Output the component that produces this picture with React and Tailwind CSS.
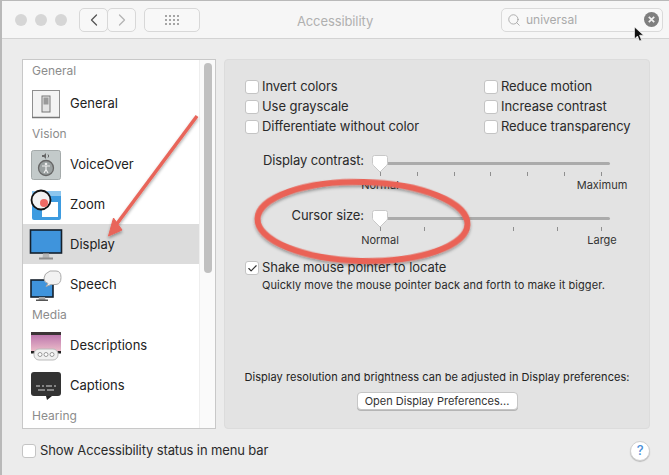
import { ChevronLeft, ChevronRight, Search, Check } from 'lucide-react';

const IconGeneral = () => (
  <svg width="34" height="34" viewBox="0 0 34 34">
    <rect x="3.500" y="3.500" width="27" height="27" fill="#f4f4f4" stroke="#8f8f8f" />
    <path d="M3 30.500h28" stroke="#777" strokeWidth="1.500" />
    <rect x="13" y="9" width="8" height="16" fill="#e4e4e4" stroke="#777" />
    <rect x="14.500" y="10.500" width="5" height="7" fill="#9a9a9a" />
  </svg>
);

const IconVoiceOver = () => (
  <svg width="34" height="34" viewBox="0 0 34 34">
    <rect x="2.500" y="2.500" width="29" height="29" rx="2" fill="#c3caca" stroke="#a4aaaa" />
    <path d="M13 7h2l2-2v6l-2-2h-2z" fill="#666" />
    <path d="M19 6.500q1.500 1.500 0 3" stroke="#666" fill="none" />
    <circle cx="17" cy="20" r="7.500" fill="#9aa0a0" stroke="#666" strokeWidth="1.300" />
    <circle cx="17" cy="16" r="1.300" fill="#eee" />
    <path d="M13 18h8M17 18v3.500l-2 3.500M17 21.500l2 3.500" stroke="#eee" strokeWidth="1.200" fill="none" />
  </svg>
);

const IconZoom = () => (
  <svg width="34" height="34" viewBox="0 0 34 34">
    <rect x="3" y="3" width="29" height="29" rx="2" fill="#3d9be0" />
    <rect x="3" y="3" width="29" height="5" fill="#8cc6ee" />
    <rect x="13" y="14" width="16" height="15" fill="#fff" />
    <circle cx="12" cy="12" r="9.500" fill="#f2f2f2" stroke="#111" strokeWidth="1.800" />
    <circle cx="15" cy="15" r="4" fill="#ee6a64" />
  </svg>
);

const IconDisplay = () => (
  <svg width="34" height="34" viewBox="0 0 34 34">
    <rect x="1.500" y="2" width="31" height="23" fill="#3f94dc" stroke="#14202c" strokeWidth="1.600" />
    <path d="M14 25.500h6l.5 5h-7z" fill="#b5b5b5" />
    <rect x="10" y="29.500" width="14" height="2" fill="#8d8d8d" />
  </svg>
);

const IconSpeech = () => (
  <svg width="34" height="34" viewBox="0 0 34 34">
    <rect x="2" y="12" width="22" height="17" fill="#3f94dc" stroke="#14202c" strokeWidth="1.600" />
    <path d="M10 29h6l.5 3h-7z" fill="#a8a8a8" />
    <rect x="7" y="31.500" width="12" height="1.500" fill="#555" />
    <path d="M21 3h6q5 0 5 6.500t-5 7h-5l-5 2 2-3q-4-1-4-5.500t6-7z" fill="#f2f2f2" stroke="#aaa" />
  </svg>
);

const IconDescriptions = () => (
  <svg width="34" height="34" viewBox="0 0 34 34">
    <defs>
      <linearGradient id="desc" x1="0" y1="0" x2="0" y2="1">
        <stop offset="0" stopColor="#b56aa8" />
        <stop offset="1" stopColor="#f0c4cc" />
      </linearGradient>
    </defs>
    <rect x="2" y="3" width="30" height="21" fill="url(#desc)" />
    <rect x="2" y="3" width="30" height="3" fill="#3c3436" />
    <rect x="2" y="22" width="30" height="2.500" fill="#222" />
    <rect x="5" y="20" width="24" height="11" rx="5" fill="#f0f0f0" stroke="#bbb" />
    <circle cx="11" cy="25.500" r="2" fill="#fff" stroke="#999" />
    <circle cx="17" cy="25.500" r="2" fill="#fff" stroke="#999" />
    <circle cx="23" cy="25.500" r="2" fill="#fff" stroke="#999" />
  </svg>
);

const IconCaptions = () => (
  <svg width="34" height="34" viewBox="0 0 34 34">
    <rect x="2" y="3" width="30" height="24" rx="3" fill="#333" />
    <path d="M17 27h6l-5 4z" fill="#222" />
    <path d="M7 17h4M13 17h2M17 17h6M25 17h2M9 21h7M18 21h7" stroke="#d8d8d8" strokeWidth="1" />
  </svg>
);

const SectionLabel = ({ children, first }) => (
  <div className={`flex items-center pl-[9px] text-[12px] text-[#8c8c8c] ${first ? 'h-[23px] pb-[2px]' : 'h-[21px]'}`}>{children}</div>
);

const ListRow = ({ icon, label, selected }) => (
  <div className={`flex h-[40px] items-center gap-[7px] pl-[6px] pt-[2px] text-[13px] text-[#222] ${selected ? 'bg-[#dcdcdc]' : ''}`}>
    {icon}
    <span>{label}</span>
  </div>
);

const Checkbox = ({ checked }) => (
  <span className="flex h-[14px] w-[14px] shrink-0 items-center justify-center rounded-[3px] border border-[#c4c4c4] bg-white">
    {checked && <Check size={11} strokeWidth={2.5} className="text-[#333]" />}
  </span>
);

const CheckRow = ({ label, checked }) => (
  <div className="flex h-[20px] items-center gap-[3px] text-[13px] tracking-[-0.07px] text-[#2a2a2a]">
    <Checkbox checked={checked} />
    <span>{label}</span>
  </div>
);

const Slider = ({ label, ticks, min, max }) => (
  <div className="flex h-[55px]">
    <div className="w-[119px] pt-[1px] text-right text-[13px] leading-[18px] tracking-[-0.1px] text-[#2a2a2a]">{label}</div>
    <div className="relative ml-[16px] w-[230px]">
      <div className="mt-[12px] h-[3px] rounded-full bg-[#ababab]" />
      <div className="relative mt-[7px] flex w-[222px] justify-between">
        {ticks.map((t) => (
          <span key={t} className="h-[4px] w-px bg-[#8f8f8f]" />
        ))}
      </div>
      <div className="absolute left-[-8px] top-[5px]">
        <svg width="16" height="18" viewBox="0 0 16 18">
          <path d="M2.500.5h11q2 0 2 2v6q0 1-1 2L8 17 1.500 10.500q-1-1-1-2v-6q0-2 2-2z" fill="#fff" stroke="#c8c8c8" />
        </svg>
      </div>
      <div className="absolute left-[-40px] top-[27px] w-[80px] text-center text-[11px] text-[#333]">{min}</div>
      <div className="absolute left-[182px] top-[27px] w-[80px] text-center text-[11px] text-[#333]">{max}</div>
    </div>
  </div>
);

export default function App() {
  return (
    <div className="h-[475px] w-[669px] overflow-hidden bg-[#b9b9b9] pl-[2px] pt-[1px] font-['Inter','Liberation_Sans',sans-serif]">
      <div className="relative h-[474px] w-[667px] rounded-tl-[5px] bg-[#ececec]">
        {/* barra de titulo */}
        <div className="relative flex h-[38px] items-center border-b border-[#d3d3d3] bg-[#f6f6f6] pl-[13px] pr-[6px]">
          <div className="flex gap-[8px]">
            <span className="h-[12px] w-[12px] rounded-full bg-[#d6d6d6]" />
            <span className="h-[12px] w-[12px] rounded-full bg-[#d6d6d6]" />
            <span className="h-[12px] w-[12px] rounded-full bg-[#d6d6d6]" />
          </div>
          <div className="ml-[12px] flex">
            <span className="flex h-[24px] w-[29px] items-center justify-center rounded-[5px] border border-[#d8d8d8] bg-[#f8f8f8]">
              <ChevronLeft size={20} strokeWidth={1.5} className="text-[#555]" />
            </span>
            <span className="-ml-px flex h-[24px] w-[29px] items-center justify-center rounded-[5px] border border-[#d8d8d8] bg-[#f8f8f8]">
              <ChevronRight size={20} strokeWidth={1.5} className="text-[#b5b5b5]" />
            </span>
          </div>
          <span className="ml-[8px] flex h-[24px] w-[56px] items-center justify-center rounded-[5px] border border-[#d8d8d8] bg-[#f8f8f8]">
            <span className="grid grid-cols-4 gap-[2px]">
              {Array.from({ length: 12 }).map((_, i) => (
                <span key={i} className="h-[2px] w-[2px] bg-[#a5a5a5]" />
              ))}
            </span>
          </span>
          <span className="absolute left-[233px] top-[11px] w-[200px] text-center text-[13px] tracking-[-0.1px] text-[#b0b0b0]">Accessibility</span>
          <div className="ml-auto flex h-[24px] w-[162px] items-center rounded-[5px] border border-[#dadada] bg-[#f8f8f8] pl-[5px] pr-[3px]">
            <Search size={14} strokeWidth={1.3} className="text-[#999]" />
            <span className="ml-[5px] text-[12px] text-[#aaa]">universal</span>
            <span className="ml-auto flex h-[15px] w-[15px] items-center justify-center rounded-full bg-[#7f7f7f]">
              <svg width="7" height="7" viewBox="0 0 7 7">
                <path d="M.8.8l5.400 5.400M6.200.8L.8 6.200" stroke="#f0f0f0" strokeWidth="1.700" />
              </svg>
            </span>
          </div>
        </div>

        <div className="flex gap-[8px] pl-[20px] pt-[20px]">
          {/* lista lateral */}
          <div className="flex h-[370px] w-[194px] overflow-hidden border border-[#c8c8c8] bg-white">
            <div className="w-[177px]">
              <SectionLabel first>General</SectionLabel>
              <ListRow icon={<IconGeneral />} label="General" />
              <SectionLabel>Vision</SectionLabel>
              <ListRow icon={<IconVoiceOver />} label="VoiceOver" />
              <ListRow icon={<IconZoom />} label="Zoom" />
              <ListRow icon={<IconDisplay />} label="Display" selected />
              <ListRow icon={<IconSpeech />} label="Speech" />
              <SectionLabel>Media</SectionLabel>
              <ListRow icon={<IconDescriptions />} label="Descriptions" />
              <ListRow icon={<IconCaptions />} label="Captions" />
              <SectionLabel>Hearing</SectionLabel>
            </div>
            <div className="flex-1 border-l border-[#eeeeee] bg-[#fafafa] px-[3.500px] pt-[3px]">
              <div className="h-[210px] w-[8px] rounded-full bg-[#c0c0c0]" />
            </div>
          </div>

          {/* panel de opciones */}
          <div className="flex h-[370px] w-[426px] flex-col rounded-[4px] border border-[#dcdcdc] bg-[#e3e3e3] pl-[20px] pt-[17px]">
            <div className="flex">
              <div className="w-[239px]">
                <CheckRow label="Invert colors" />
                <CheckRow label="Use grayscale" />
                <CheckRow label="Differentiate without color" />
              </div>
              <div>
                <CheckRow label="Reduce motion" />
                <CheckRow label="Increase contrast" />
                <CheckRow label="Reduce transparency" />
              </div>
            </div>
            <div className="mt-[13px]">
              <Slider label="Display contrast:" ticks={[1, 2, 3, 4, 5, 6, 7]} min="Normal" max="Maximum" />
            </div>
            <Slider label="Cursor size:" ticks={[1, 2, 3, 4, 5, 6]} min="Normal" max="Large" />
            <div className="mt-[-2px]">
              <CheckRow label="Shake mouse pointer to locate" checked />
            </div>
            <div className="pl-[17px] text-[11px] leading-[14px] tracking-[0.06px] text-[#2a2a2a]">
              Quickly move the mouse pointer back and forth to make it bigger.
            </div>
            <div className="-ml-[20px] mt-auto flex flex-col items-center pb-[18px]">
              <div className="text-[11px] tracking-[0.05px] text-[#222]">Display resolution and brightness can be adjusted in Display preferences:</div>
              <button className="mt-[7px] h-[18px] w-[161px] rounded-[4px] border border-[#c6c6c6] bg-white text-[11px] leading-[16px] text-[#333] shadow-[0_1px_0_#b5b5b5]">
                Open Display Preferences...
              </button>
            </div>
          </div>
        </div>

        {/* pie */}
        <div className="flex h-[36px] items-center pl-[20px] pr-[19px] pt-[8px] text-[13px] tracking-[-0.12px] text-[#2a2a2a]">
          <Checkbox />
          <span className="ml-[4px]">Show Accessibility status in menu bar</span>
          <span className="ml-auto flex h-[20px] w-[20px] items-center justify-center rounded-full border border-[#d0d0d0] bg-white text-[13px] font-medium text-[#4a90d9] shadow-[0_1px_1px_#bbb]">?</span>
        </div>
      </div>

      {/* anotaciones encima de la captura */}
      <svg className="absolute left-0 top-0" width="669" height="475" viewBox="0 0 669 475">
        <defs>
          <filter id="sh" x="-10%" y="-10%" width="120%" height="130%">
            <feDropShadow dx="0" dy="2" stdDeviation="1.500" floodColor="#000" floodOpacity="0.35" />
          </filter>
        </defs>
        <g filter="url(#sh)">
          <path d="M197 116L113 229" stroke="#e8655a" strokeWidth="3.500" fill="none" />
          <path d="M108.500 236L113.500 218L122 230z" fill="#e8655a" stroke="#e8655a" strokeLinejoin="round" />
          <ellipse cx="362.500" cy="221.500" rx="105" ry="39.500" transform="rotate(1.500 362.500 221.500)" fill="none" stroke="#ea6256" strokeWidth="6" />
        </g>
        <path d="M634.500 27v12l3-3 2 5 2-.8-2-5h4z" fill="#111" stroke="#fff" strokeWidth="0.600" />
      </svg>
    </div>
  );
}
